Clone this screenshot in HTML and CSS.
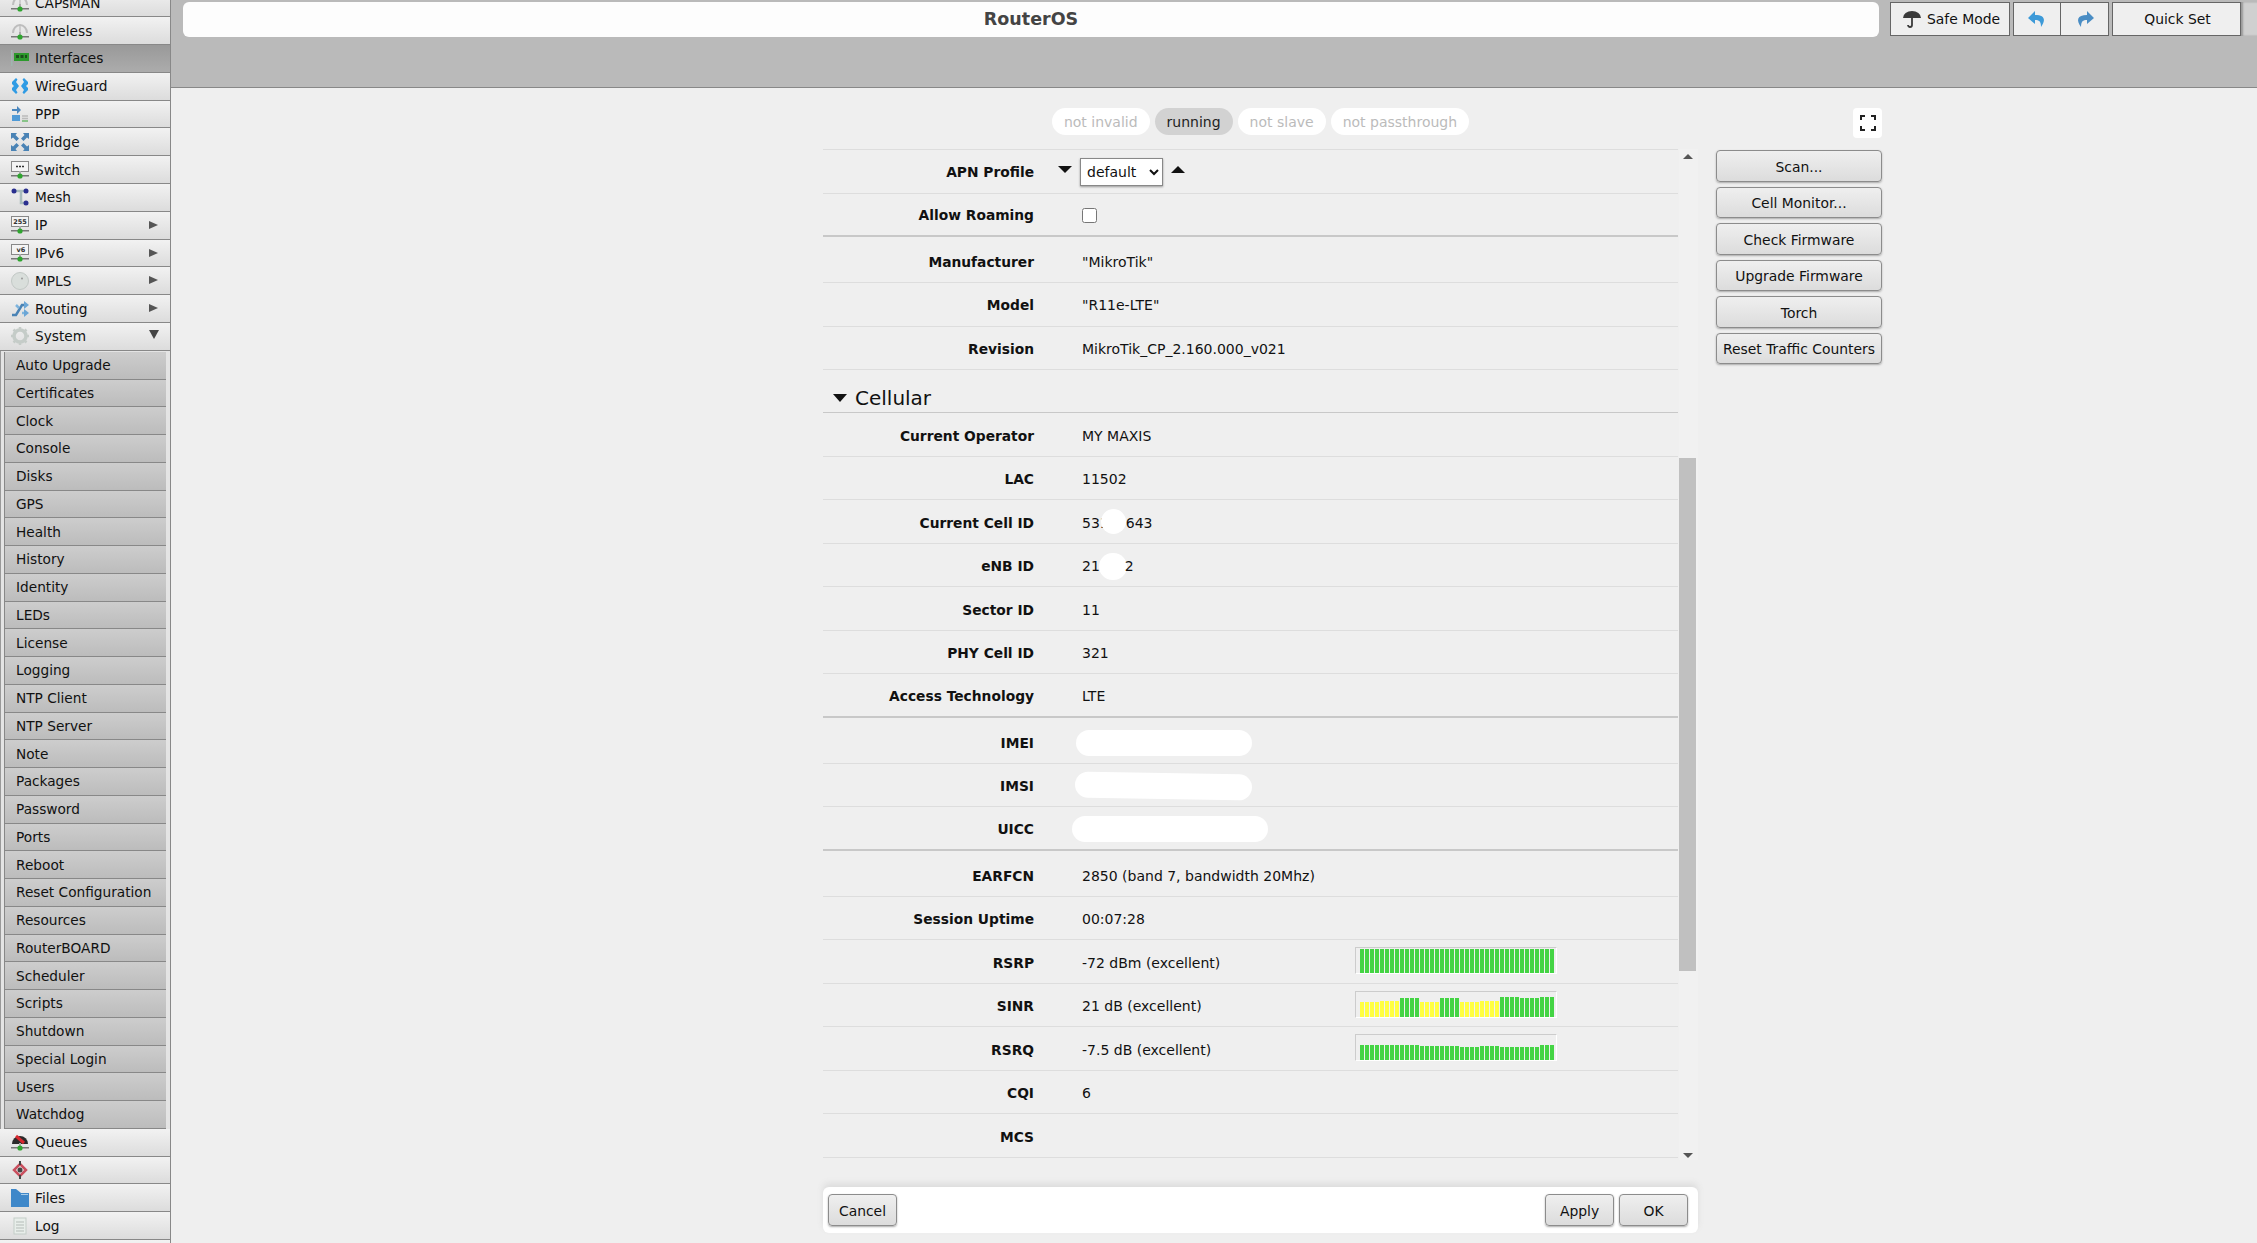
FILE: index.html
```html
<!DOCTYPE html>
<html lang="en">
<head>
  <meta charset="UTF-8">
  <title>RouterOS</title>
  <link rel="stylesheet" href="styles.css">
</head>
<body>
  <svg class="defs" width="0" height="0">
    <symbol id="net" viewBox="0 0 18 18">
      <rect x="0" y="14" width="18" height="1.5" fill="#777"/>
      <rect x="8" y="10" width="2" height="5" fill="#aaa"/>
      <circle cx="9" cy="15" r="2.6" fill="#2fa52f"/>
    </symbol>
    <symbol id="antenna" viewBox="0 0 18 18">
      <path d="M2 11a7 8 0 0 1 14 0" fill="none" stroke="#bdbdbd" stroke-width="2"/>
      <rect x="8" y="4" width="2" height="9" fill="#ccc"/>
      <use href="#net"/>
    </symbol>
    <symbol id="screen" viewBox="0 0 18 18">
      <rect x="0.5" y="0.5" width="17" height="10" fill="#f4f4f4" stroke="#888"/>
      <use href="#net"/>
    </symbol>
  </svg>

  <nav class="sidebar">
    <div class="menu-item"><svg class="icon"><use href="#antenna"/></svg>CAPsMAN</div>
    <div class="menu-item"><svg class="icon"><use href="#antenna"/></svg>Wireless</div>
    <div class="menu-item active">
      <svg class="icon" viewBox="0 0 18 18"><rect x="0" y="1" width="1.500" height="16" fill="#9fb5b0"/><rect x="3" y="4" width="15" height="8" fill="#2c9a2c"/><rect x="5" y="6" width="3" height="3" fill="#1b4d1b"/><rect x="9.500" y="6" width="3" height="3" fill="#1b4d1b"/><rect x="14" y="6" width="2" height="3" fill="#1b4d1b"/></svg>Interfaces
    </div>
    <div class="menu-item">
      <svg class="icon" viewBox="0 0 18 18"><path d="M5 1 1 5v2l2 2-2 2v2l4 4 1.500-1.500L5 13l3-4-3-4 1.500-2.500zM13 1l4 4v2l-2 2 2 2v2l-4 4-1.500-1.500L13 13l-3-4 3-4-1.500-2.500z" fill="#2f9be4"/></svg>WireGuard
    </div>
    <div class="menu-item">
      <svg class="icon" viewBox="0 0 18 18"><path d="M1 4h5V1l4 4-4 4V6H1z" fill="#4a86bd"/><rect x="1" y="10" width="8" height="6" fill="#4f9ad6"/><path d="M11 11h6M11 13.500h6" stroke="#bbb" stroke-width="1.500"/><path d="M11 16h6" stroke="#6ab86a" stroke-width="1.500"/></svg>PPP
    </div>
    <div class="menu-item">
      <svg class="icon" viewBox="0 0 18 18"><path d="M0 0h6L4.500 2 8 5.500 5.500 8 2 4.500 0 6zM18 0v6l-2-1.500L12.500 8 10 5.500 13.500 2 12 0zM0 18v-6l2 1.500L5.500 10 8 12.500 4.500 16 6 18zM18 18h-6l1.500-2-3.500-3.500 2.500-2.500 3.500 3.500 2-1.500z" fill="#4a83b5"/></svg>Bridge
    </div>
    <div class="menu-item">
      <svg class="icon" viewBox="0 0 18 18"><use href="#screen"/><path d="M5 5.500h2M8 5.500h2M11 5.500h2" stroke="#333" stroke-width="1.500"/></svg>Switch
    </div>
    <div class="menu-item">
      <svg class="icon" viewBox="0 0 18 18"><path d="M3 3h12M10 3v12h5" fill="none" stroke="#a9bcbc" stroke-width="2.500"/><circle cx="3" cy="3" r="2.500" fill="#2a2f8f"/><circle cx="15" cy="3" r="2.500" fill="#2a2f8f"/><circle cx="15" cy="15" r="2.500" fill="#2a2f8f"/></svg>Mesh
    </div>
    <div class="menu-item has-sub">
      <svg class="icon" viewBox="0 0 18 18"><use href="#screen"/><text x="9" y="8" class="icon-text">255</text></svg>IP
    </div>
    <div class="menu-item has-sub">
      <svg class="icon" viewBox="0 0 18 18"><use href="#screen"/><text x="10" y="8" class="icon-text">v6</text></svg>IPv6
    </div>
    <div class="menu-item has-sub">
      <svg class="icon" viewBox="0 0 18 18"><circle cx="9" cy="9" r="8.500" fill="#d9dedb" stroke="#c2c8c5"/><circle cx="11" cy="6.500" r="1" fill="#999"/></svg>MPLS
    </div>
    <div class="menu-item has-sub">
      <svg class="icon" viewBox="0 0 18 18"><path d="M1 15h4l6-10h3" fill="none" stroke="#4a83b5" stroke-width="2.500"/><path d="M5 5l3 3M11 13h3" fill="none" stroke="#7eb4dd" stroke-width="2.500"/><path d="M13 1l5 4-5 4zM13 9l5 4-5 4z" fill="#6ba6d6"/></svg>Routing
    </div>
    <div class="menu-item open">
      <svg class="icon" viewBox="0 0 18 18"><circle cx="9" cy="9" r="6" fill="none" stroke="#c5ccc8" stroke-width="3.500"/><path d="M9 0v3M9 15v3M0 9h3M15 9h3M2.500 2.500l2 2M13.500 13.500l2 2M2.500 15.500l2-2M13.500 4.500l2-2" stroke="#c5ccc8" stroke-width="2.500"/></svg>System
    </div>

    <div class="submenu">
      <div class="sub-item">Auto Upgrade</div>
      <div class="sub-item">Certificates</div>
      <div class="sub-item">Clock</div>
      <div class="sub-item">Console</div>
      <div class="sub-item">Disks</div>
      <div class="sub-item">GPS</div>
      <div class="sub-item">Health</div>
      <div class="sub-item">History</div>
      <div class="sub-item">Identity</div>
      <div class="sub-item">LEDs</div>
      <div class="sub-item">License</div>
      <div class="sub-item">Logging</div>
      <div class="sub-item">NTP Client</div>
      <div class="sub-item">NTP Server</div>
      <div class="sub-item">Note</div>
      <div class="sub-item">Packages</div>
      <div class="sub-item">Password</div>
      <div class="sub-item">Ports</div>
      <div class="sub-item">Reboot</div>
      <div class="sub-item">Reset Configuration</div>
      <div class="sub-item">Resources</div>
      <div class="sub-item">RouterBOARD</div>
      <div class="sub-item">Scheduler</div>
      <div class="sub-item">Scripts</div>
      <div class="sub-item">Shutdown</div>
      <div class="sub-item">Special Login</div>
      <div class="sub-item">Users</div>
      <div class="sub-item">Watchdog</div>
    </div>

    <div class="menu-item">
      <svg class="icon" viewBox="0 0 18 18"><path d="M1 11a8 8 0 0 1 16 0z" fill="#2b2b2b"/><path d="M5 3l8 7" stroke="#d8282f" stroke-width="3"/><use href="#net"/></svg>Queues
    </div>
    <div class="menu-item">
      <svg class="icon" viewBox="0 0 18 18"><path d="M9 3l6 6-6 6-6-6z" fill="none" stroke="#c9505f" stroke-width="2.500"/><circle cx="9" cy="9" r="2.500" fill="#444"/><path d="M9 0v4M9 14v4" stroke="#444" stroke-width="2"/></svg>Dot1X
    </div>
    <div class="menu-item">
      <svg class="icon" viewBox="0 0 18 18"><path d="M0 0h5l5 4h8v14H0z" fill="#3f88c9"/><rect x="10" y="5" width="7" height="1" fill="#a8cdea"/></svg>Files
    </div>
    <div class="menu-item">
      <svg class="icon" viewBox="0 0 18 18"><rect x="3" y="1" width="12" height="16" fill="#e8eeea" stroke="#c4cdc8"/><path d="M5 5h8M5 8h8M5 11h8M5 14h8" stroke="#b5bcb8"/></svg>Log
    </div>
    <div class="menu-item"></div>
  </nav>

  <div class="main">
    <header class="topbar">
      <div class="title">RouterOS</div>
      <button class="top-btn safe-btn">
        <svg class="umbrella" viewBox="0 0 18 18"><path d="M0 8a9 7 0 0 1 18 0z" fill="#3a3a3a"/><path d="M9 8v7a2 2 0 0 1-4 0" fill="none" stroke="#3a3a3a" stroke-width="1.800"/></svg>
        Safe Mode
      </button>
      <div class="undo-group">
        <button class="top-btn arrow-btn"><svg class="arrow" viewBox="0 0 18 18"><path d="M7 1 0 8l7 6v-4c4 0 6 1 6 7 5-7 4-12-6-12z" fill="#3d9ad8"/></svg></button>
        <button class="top-btn arrow-btn"><svg class="arrow flip" viewBox="0 0 18 18"><path d="M7 1 0 8l7 6v-4c4 0 6 1 6 7 5-7 4-12-6-12z" fill="#4a8dc4"/></svg></button>
      </div>
      <button class="top-btn quick-btn">Quick Set</button>
      <div class="top-end"></div>
    </header>

    <div class="workspace">
      <div class="pills">
        <span class="pill">not invalid</span>
        <span class="pill on">running</span>
        <span class="pill">not slave</span>
        <span class="pill">not passthrough</span>
      </div>
      <div class="fullscreen">
        <svg viewBox="0 0 16 16" width="16" height="16"><path d="M1 5V1h4M11 1h4v4M15 11v4h-4M5 15H1v-4" fill="none" stroke="#222" stroke-width="2"/></svg>
      </div>

      <div class="form-area">
        <div class="form-rows">
          <div class="row">
            <div class="label">APN Profile</div>
            <div class="value select-value">
              <i class="tri-down"></i>
              <select class="apn-select"><option>default</option></select>
              <i class="tri-up"></i>
            </div>
          </div>
          <div class="row end">
            <div class="label">Allow Roaming</div>
            <div class="value"><input type="checkbox" class="check"></div>
          </div>
          <div class="row"><div class="label">Manufacturer</div><div class="value">"MikroTik"</div></div>
          <div class="row"><div class="label">Model</div><div class="value">"R11e-LTE"</div></div>
          <div class="row"><div class="label">Revision</div><div class="value">MikroTik_CP_2.160.000_v021</div></div>

          <div class="section"><i class="section-arrow"></i>Cellular</div>

          <div class="row"><div class="label">Current Operator</div><div class="value">MY MAXIS</div></div>
          <div class="row"><div class="label">LAC</div><div class="value">11502</div></div>
          <div class="row"><div class="label">Current Cell ID</div><div class="value">531<span class="blob blob-cell"></span>643</div></div>
          <div class="row"><div class="label">eNB ID</div><div class="value">21<span class="blob blob-enb"></span>2</div></div>
          <div class="row"><div class="label">Sector ID</div><div class="value">11</div></div>
          <div class="row"><div class="label">PHY Cell ID</div><div class="value">321</div></div>
          <div class="row end"><div class="label">Access Technology</div><div class="value">LTE</div></div>

          <div class="row"><div class="label">IMEI</div><div class="value"><span class="blob blob-imei"></span></div></div>
          <div class="row"><div class="label">IMSI</div><div class="value"><span class="blob blob-imsi"></span></div></div>
          <div class="row end"><div class="label">UICC</div><div class="value"><span class="blob blob-uicc"></span></div></div>

          <div class="row"><div class="label">EARFCN</div><div class="value">2850 (band 7, bandwidth 20Mhz)</div></div>
          <div class="row"><div class="label">Session Uptime</div><div class="value">00:07:28</div></div>
          <div class="row">
            <div class="label">RSRP</div><div class="value signal-text">-72 dBm (excellent)</div>
            <div class="bars" data-levels="24x39"></div>
          </div>
          <div class="row">
            <div class="label">SINR</div><div class="value signal-text">21 dB (excellent)</div>
            <div class="bars" data-levels="15y4,16y4,19x4,15y4,19x4,15y4,16y4,20x4,19x4,20x3"></div>
          </div>
          <div class="row">
            <div class="label">RSRQ</div><div class="value signal-text">-7.5 dB (excellent)</div>
            <div class="bars" data-levels="15x12,14x8,13x4,14x4,13x8,15x3"></div>
          </div>
          <div class="row"><div class="label">CQI</div><div class="value">6</div></div>
          <div class="row"><div class="label">MCS</div><div class="value"></div></div>
        </div>
        <div class="scrollbar">
          <i class="scroll-up"></i>
          <div class="scroll-track"><div class="scroll-thumb"></div></div>
          <i class="scroll-down"></i>
        </div>
      </div>

      <div class="actions">
        <button class="btn">Scan...</button>
        <button class="btn">Cell Monitor...</button>
        <button class="btn">Check Firmware</button>
        <button class="btn">Upgrade Firmware</button>
        <button class="btn">Torch</button>
        <button class="btn">Reset Traffic Counters</button>
      </div>

      <div class="footer">
        <button class="btn foot-btn">Cancel</button>
        <div class="foot-right">
          <button class="btn foot-btn">Apply</button>
          <button class="btn foot-btn">OK</button>
        </div>
      </div>
    </div>
  </div>

  <script src="script.js"></script>
</body>
</html>
```

FILE: styles.css
```css
html, body {
  height: 100%;
  overflow: hidden;
}
body {
  margin: 0;
  display: flex;
  align-items: flex-start;
  background: #efefef;
  color: #111;
  font-family: "DejaVu Sans", sans-serif;
  font-size: 14px;
}
button {
  font-family: inherit;
  font-size: 13.9px;
  color: #111;
  padding: 0;
}
.defs {
  position: absolute;
}

/* left menu */
.sidebar {
  width: 170px;
  flex: none;
  margin-top: -10.5px;
  border-right: 1px solid #888;
  font-size: 13.7px;
}
.menu-item {
  height: 27.8px;
  box-sizing: border-box;
  display: flex;
  align-items: center;
  position: relative;
  padding-left: 11px;
  background: linear-gradient(to bottom, #f2f2f2, #dcdcdc);
  border-bottom: 1px solid #888;
}
.menu-item.active {
  background: linear-gradient(to bottom, #999, #acacac);
}
.icon {
  width: 18px;
  height: 18px;
  margin-right: 6px;
  flex: none;
}
.icon-text {
  font-size: 6.5px;
  font-weight: bold;
  text-anchor: middle;
  fill: #333;
}
.has-sub::after {
  content: "";
  position: absolute;
  right: 12px;
  top: 9px;
  border-left: 9px solid #555;
  border-top: 4.5px solid transparent;
  border-bottom: 4.5px solid transparent;
}
.open::after {
  content: "";
  position: absolute;
  right: 11px;
  top: 7px;
  border-top: 9px solid #444;
  border-left: 5px solid transparent;
  border-right: 5px solid transparent;
}
.submenu {
  background: #e4e4e4;
  padding: 1px 4px 0;
  box-shadow: inset 1px 0 0 #999;
}
.sub-item {
  height: 27.75px;
  box-sizing: border-box;
  display: flex;
  align-items: center;
  padding-left: 11px;
  background: linear-gradient(to bottom, #cdcdcd, #bcbcbc);
  border-left: 1px solid #888;
  border-bottom: 1px solid #888;
}

/* top bar */
.main {
  flex: 1;
  min-width: 0;
}
.topbar {
  height: 85px;
  background: #bababa;
  border-bottom: 1px solid #888;
  display: flex;
  align-items: flex-start;
  padding: 2px 0 0 12px;
}
.title {
  width: 1696px;
  height: 35px;
  line-height: 35px;
  flex: none;
  background: #fdfdfd;
  border-radius: 6px;
  text-align: center;
  font-size: 17.5px;
  font-weight: bold;
  color: #444;
}
.top-btn {
  height: 34px;
  background: #efefef;
  border: 1px solid #666;
  box-sizing: border-box;
}
.safe-btn {
  width: 120px;
  margin-left: 11px;
  padding-left: 3px;
  display: flex;
  align-items: center;
  justify-content: center;
  gap: 6px;
}
.umbrella {
  width: 18px;
  height: 18px;
}
.undo-group {
  display: flex;
  margin-left: 3px;
}
.arrow-btn {
  width: 48px;
  display: flex;
  align-items: center;
  justify-content: center;
}
.arrow-btn + .arrow-btn {
  border-left: 0;
}
.arrow {
  width: 18px;
  height: 18px;
}
.flip {
  transform: scaleX(-1);
}
.quick-btn {
  width: 129px;
  margin-left: 3px;
  padding-left: 2px;
}
.top-end {
  flex: 1;
  height: 34px;
  background: #d0d0d0;
  box-shadow: inset 2px 0 2px #999;
}

/* content */
.workspace {
  display: grid;
  grid-template-columns: 875px 166px;
  grid-template-rows: 30px 1011px 46px;
  column-gap: 18px;
  row-gap: 11px;
  padding: 20px 0 0 652px;
}
.pills {
  display: flex;
  justify-content: center;
  gap: 5px;
  height: 27px;
}
.pill {
  display: flex;
  align-items: center;
  padding: 1px 12px 0;
  border-radius: 14px;
  background: #fff;
  color: #bbb;
}
.pill.on {
  background: #d2d2d2;
  color: #222;
}
.fullscreen {
  justify-self: end;
  width: 29px;
  height: 30px;
  background: #fff;
  border-radius: 4px;
  display: flex;
  align-items: center;
  justify-content: center;
}
.form-area {
  display: flex;
  height: 1011px;
  overflow: hidden;
}
.form-rows {
  width: 855px;
  flex: none;
  border-top: 1px solid #ddd;
}
.row {
  height: 43.5px;
  box-sizing: border-box;
  display: flex;
  align-items: center;
  padding-top: 2px;
  border-bottom: 1px solid #ddd;
}
.section ~ .row {
  padding-top: 3px;
}
.row.end {
  border-bottom: 2px solid #c8c8c8;
  margin-bottom: 2.5px;
}
.label {
  width: 211px;
  flex: none;
  text-align: right;
  font-weight: bold;
  font-size: 13.8px;
  color: #111;
}
.value {
  margin-left: 48px;
  display: flex;
  align-items: center;
}
.signal-text {
  width: 273px;
  flex: none;
}
.select-value {
  position: relative;
}
.tri-down {
  position: absolute;
  left: -24px;
  top: 8px;
  border-top: 7px solid #111;
  border-left: 7px solid transparent;
  border-right: 7px solid transparent;
}
.tri-up {
  position: absolute;
  right: -22px;
  top: 8px;
  border-bottom: 7px solid #111;
  border-left: 7px solid transparent;
  border-right: 7px solid transparent;
}
.apn-select {
  width: 83px;
  height: 28px;
  margin-left: -2px;
  padding-left: 2px;
  background: #fff;
  border: 1px solid #888;
  border-radius: 0;
  box-shadow: 0 1px 2px #999;
  font-family: inherit;
  font-size: 14px;
  color: #111;
}
.check {
  width: 15px;
  height: 15px;
  margin: 0;
}
.section {
  height: 43px;
  box-sizing: border-box;
  display: flex;
  align-items: flex-end;
  padding: 0 0 2px 10px;
  border-bottom: 1px solid #c8c8c8;
  font-size: 20px;
}
.section-arrow {
  align-self: center;
  margin: 16px 8px 0 0;
  border-top: 8px solid #111;
  border-left: 7px solid transparent;
  border-right: 7px solid transparent;
}
.blob {
  display: inline-block;
  background: #fff;
  border-radius: 14px;
}
.blob-cell {
  width: 25px;
  height: 25px;
  margin: 0 0 3px -8px;
}
.blob-enb {
  width: 28px;
  height: 27px;
  margin: 0 -2px 0 -1px;
}
.blob-imei {
  width: 176px;
  height: 26px;
  margin-left: -6px;
}
.blob-imsi {
  width: 177px;
  height: 26px;
  margin-left: -7px;
  transform: rotate(1deg);
}
.blob-uicc {
  width: 196px;
  height: 26px;
  margin-left: -10px;
}
.bars {
  width: 202px;
  height: 27px;
  margin-bottom: 4px;
  box-sizing: border-box;
  display: flex;
  align-items: flex-end;
  gap: 1px;
  padding: 0 0 0 4px;
  border-top: 1px solid #ccc;
  border-left: 1px solid #ccc;
  border-right: 1px solid #fff;
  border-bottom: 1px solid #fff;
}
.bar {
  width: 4px;
  flex: none;
}
.bar.x {
  background: #44d444;
}
.bar.y {
  background: #ffff40;
}
.scrollbar {
  width: 19px;
  margin-left: 1px;
  display: flex;
  flex-direction: column;
  align-items: center;
  background: #f1f1f1;
}
.scroll-up {
  margin: 5px 1px 0 0;
  border-bottom: 5px solid #555;
  border-left: 5px solid transparent;
  border-right: 5px solid transparent;
}
.scroll-down {
  margin: 0 1px 2px 0;
  border-top: 5px solid #555;
  border-left: 5px solid transparent;
  border-right: 5px solid transparent;
}
.scroll-track {
  flex: 1;
  width: 100%;
  padding-top: 299px;
  box-sizing: border-box;
}
.scroll-thumb {
  width: 17px;
  height: 513px;
  background: #c0c0c0;
}
.actions {
  display: flex;
  flex-direction: column;
  gap: 5px;
  padding-top: 1px;
}
.btn {
  height: 31.5px;
  padding-top: 2px;
  background: linear-gradient(to bottom, #efefef, #dcdcdc);
  border: 1px solid #8c8c8c;
  border-radius: 4px;
  box-shadow: 0 1px 2px #aaa;
  white-space: nowrap;
}
.footer {
  grid-column: 1;
  margin-top: 16px;
  height: 46px;
  width: 875px;
  box-sizing: border-box;
  display: flex;
  justify-content: space-between;
  align-items: center;
  padding: 0 10px 0 5px;
  background: #fff;
  border-radius: 6px;
  box-shadow: 0 -4px 6px #ddd;
}
.foot-right {
  display: flex;
  gap: 5px;
}
.foot-btn {
  width: 69px;
  height: 32px;
}
```

FILE: script.js
```js
// signal history bars, "height + colour + count" per run
document.querySelectorAll(".bars").forEach((box) => {
  box.dataset.levels.split(",").forEach((run) => {
    const m = run.match(/(\d+)([xy])(\d+)/);
    for (let i = 0; i < Number(m[3]); i++) {
      const bar = document.createElement("div");
      bar.className = "bar " + m[2];
      bar.style.height = m[1] + "px";
      box.appendChild(bar);
    }
  });
});
```
